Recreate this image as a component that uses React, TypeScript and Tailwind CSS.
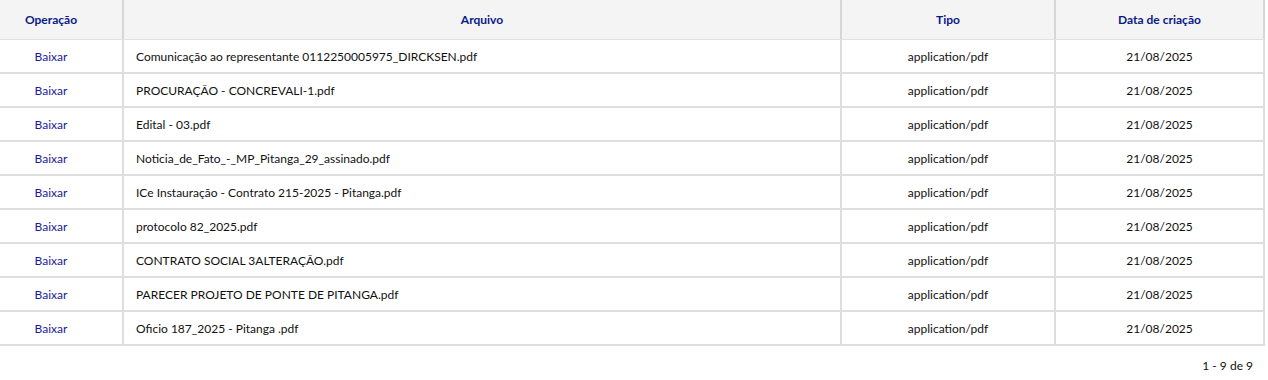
const rows = [
  "Comunicação ao representante 0112250005975_DIRCKSEN.pdf",
  "PROCURAÇÃO - CONCREVALI-1.pdf",
  "Edital - 03.pdf",
  "Noticia_de_Fato_-_MP_Pitanga_29_assinado.pdf",
  "ICe Instauração - Contrato 215-2025 - Pitanga.pdf",
  "protocolo 82_2025.pdf",
  "CONTRATO SOCIAL 3ALTERAÇÃO.pdf",
  "PARECER PROJETO DE PONTE DE PITANGA.pdf",
  "Oficio 187_2025 - Pitanga .pdf",
];

const cols = "grid grid-cols-[124px_718px_214px_209px]";

export default function App() {
  return (
    <div className="w-[1268px] h-[380px] bg-white text-[12px] text-[#111] font-['Segoe_UI','Lato',sans-serif]">
      <div className="w-[1265px]">
        <div className={`${cols} h-[40px] bg-[#f4f4f4] border-b border-[#e0e0e0] font-bold text-[#0b1a86]`}>
          <div className="flex items-center justify-center pr-[20px] border-r-2 border-[#d6d6d6]">Operação</div>
          <div className="flex items-center justify-center border-r-2 border-[#d6d6d6]">Arquivo</div>
          <div className="flex items-center justify-center border-r-2 border-[#d6d6d6]">Tipo</div>
          <div className="flex items-center justify-center border-r-2 border-[#d6d6d6]">Data de criação</div>
        </div>
        {rows.map((name) => (
          <div key={name} className={`${cols} h-[34px] border-b-2 border-[#dedede]`}>
            <div className="flex items-center justify-center pr-[20px] pt-px border-r-2 border-[#dedede]">
              <a href="#" className="text-[#1a1a9a]">Baixar</a>
            </div>
            <div className="flex items-center pl-3 pt-px border-r-2 border-[#dedede]">{name}</div>
            <div className="flex items-center justify-center pt-px border-r-2 border-[#dedede]">application/pdf</div>
            <div className="flex items-center justify-center pt-px border-r-2 border-[#dedede]">21/08/2025</div>
          </div>
        ))}
        <div className="flex h-[36px] items-center justify-end pr-3 pt-1">1 - 9 de 9</div>
      </div>
    </div>
  );
}
